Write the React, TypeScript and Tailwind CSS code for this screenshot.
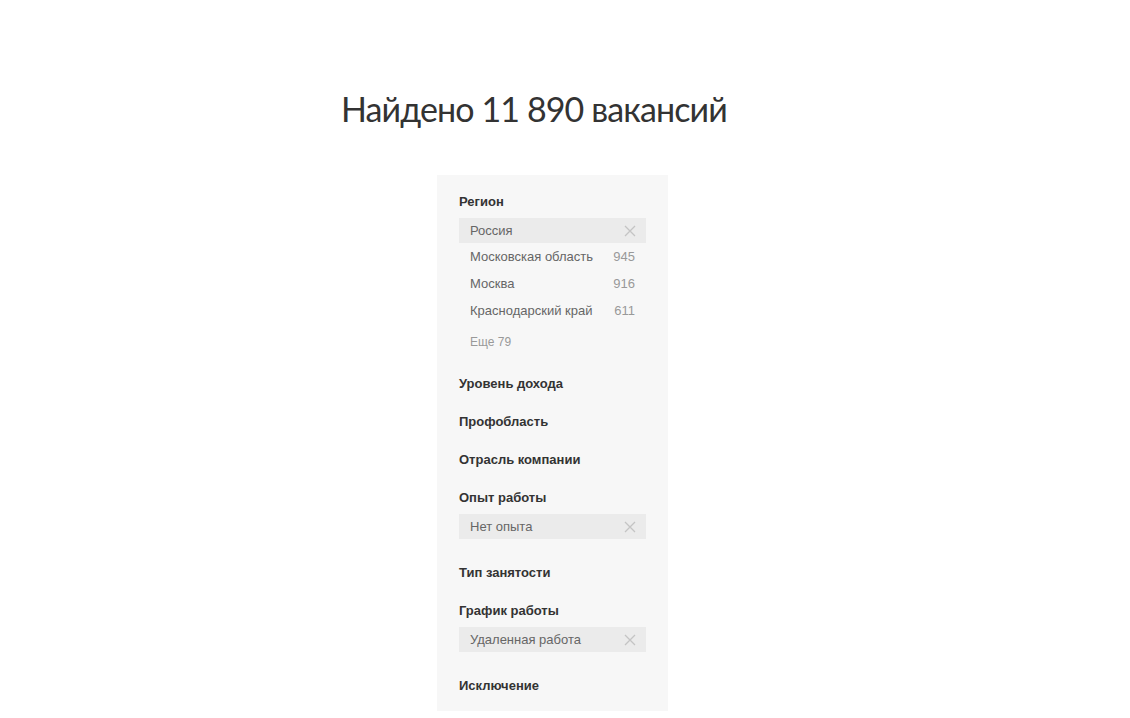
import React from "react";

type Item = { name: string; count: number };

const regions: Item[] = [
  { name: "Московская область", count: 945 },
  { name: "Москва", count: 916 },
  { name: "Краснодарский край", count: 611 },
];

function CloseIcon() {
  return (
    <svg width="12" height="12" viewBox="0 0 12 12" className="shrink-0">
      <path d="M1 1L11 11M11 1L1 11" stroke="#c4c4c4" strokeWidth="1.3" />
    </svg>
  );
}

function Chip({ label }: { label: string }) {
  return (
    <div className="mt-2 flex h-[25px] items-center justify-between bg-[#ebebeb] pl-[11px] pr-[10px] text-[13px] text-[#666]">
      <span>{label}</span>
      <CloseIcon />
    </div>
  );
}

function Label({ children, className = "" }: { children: React.ReactNode; className?: string }) {
  return (
    <div className={`text-[13px] font-bold leading-4 text-[#333] ${className}`}>{children}</div>
  );
}

export default function App() {
  return (
    <div
      className="min-h-screen bg-white pl-[341px] pt-[87px]"
      style={{ fontFamily: "'Liberation Sans', Arial, sans-serif" }}
    >
      <h1
        className="text-[34px] font-normal leading-[44px] tracking-[-0.9px] text-[#333]"
        style={{ fontFamily: "Lato, 'Open Sans', sans-serif" }}
      >
        Найдено 11 890 вакансий
      </h1>

      <div className="ml-[96px] mt-[44px] w-[231px] bg-[#f7f7f7] px-[22px] pb-[17px] pt-[19px]">
        <Label>Регион</Label>
        <Chip label="Россия" />
        {regions.map((r) => (
          <div
            key={r.name}
            className="flex h-[27px] items-center justify-between px-[11px] text-[13px] text-[#666]"
          >
            <span>{r.name}</span>
            <span className="text-[#999]">{r.count}</span>
          </div>
        ))}
        <div className="mt-[10px] pl-[11px] text-[12px] leading-4 text-[#999]">Еще 79</div>

        <Label className="mt-[26px]">Уровень дохода</Label>
        <Label className="mt-[22px]">Профобласть</Label>
        <Label className="mt-[22px]">Отрасль компании</Label>
        <Label className="mt-[22px]">Опыт работы</Label>
        <Chip label="Нет опыта" />

        <Label className="mt-[26px]">Тип занятости</Label>
        <Label className="mt-[22px]">График работы</Label>
        <Chip label="Удаленная работа" />

        <Label className="mt-[26px]">Исключение</Label>
      </div>
    </div>
  );
}
